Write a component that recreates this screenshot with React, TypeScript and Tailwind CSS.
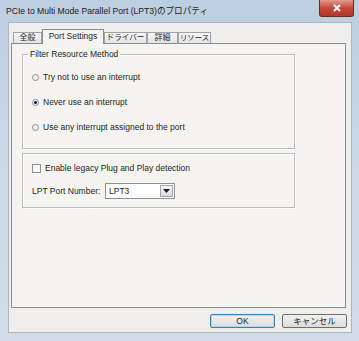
import React from "react";

const ui = { fontFamily: '"Liberation Sans", "Noto Sans CJK JP", sans-serif' };

function Radio({ checked, label }: { checked?: boolean; label: string }) {
  return (
    <div className="flex items-center h-[13px]">
      <div className="w-[7px] h-[7px] rounded-full border border-[#8a8f96] bg-[#f4f4f4] flex items-center justify-center">
        {checked && <div className="w-[3px] h-[3px] rounded-full bg-[#1a1a1a]" />}
      </div>
      <span className="ml-[4px] text-[8.5px] text-[#1e1e1e] whitespace-nowrap">{label}</span>
    </div>
  );
}

const tabs = [
  { label: "全般", cls: "w-[29px] text-[8px]" },
  { label: "Port Settings", cls: "w-[62px] text-[8.5px]", active: true },
  { label: "ドライバー", cls: "w-[43px] text-[7.6px]" },
  { label: "詳細", cls: "w-[31px] text-[8px]" },
  { label: "リソース", cls: "w-[33px] text-[7.4px]" },
];

export default function App() {
  return (
    <div
      className="w-[359px] h-[341px] flex flex-col bg-gradient-to-b from-[#bccfe1] via-[#cbd9e6] to-[#d2dde8] overflow-hidden"
      style={ui}
    >
      {/* title bar */}
      <div className="h-[22px] flex items-start relative">
        <div className="pl-[6px] pt-[7px] text-[8.6px] leading-none text-[#1b1b1b] whitespace-nowrap">
          PCIe to Multi Mode Parallel Port (LPT3)のプロパティ
        </div>
        <div className="absolute left-[319px] top-0 w-[35px] h-[17px] rounded-b-[3px] border border-[#6d2a22] border-t-0 bg-gradient-to-b from-[#e29a8c] via-[#c8463a] to-[#b0382c] flex items-center justify-center">
          <svg width="10" height="8" viewBox="0 0 10 8">
            <path d="M2 1 L8 7 M8 1 L2 7" stroke="#ffffff" strokeWidth="2" />
          </svg>
        </div>
      </div>

      {/* client area */}
      <div className="mx-[7px] ml-[8px] mb-[8px] flex-1 bg-[#efeeeb] border border-[#a9b5c2] flex flex-col">
        {/* tabs */}
        <div className="flex items-end h-[20px] pl-[4px]">
          {tabs.map((t) =>
            t.active ? (
              <div
                key={t.label}
                className={`${t.cls} relative z-10 h-[15px] -mb-[1px] border border-[#898c95] border-b-0 bg-[#f5f4f1] text-[#1e1e1e] flex items-center justify-center pb-[1px] whitespace-nowrap`}
              >
                {t.label}
              </div>
            ) : (
              <div
                key={t.label}
                className={`${t.cls} h-[11px] border border-[#9ea3aa] border-b-0 bg-gradient-to-b from-[#f7f7f7] to-[#e4e4e4] text-[#1e1e1e] flex items-center justify-center whitespace-nowrap overflow-hidden`}
              >
                {t.label}
              </div>
            )
          )}
        </div>

        {/* panel */}
        <div className="ml-[2px] mr-[5px] h-[265px] border border-[#898c95] bg-[#f5f4f1] px-[10px] pt-[10px]">
          {/* group 1 */}
          <div className="relative w-[273px] h-[95px] border border-[#b8bdc4] shadow-[inset_1px_1px_0_#ffffff,1px_1px_0_#ffffff] pt-[16px] pl-[9px] flex flex-col gap-[12px]">
            <span className="absolute left-[5px] -top-[6px] px-[2px] bg-[#f5f4f1] text-[8.5px] text-[#1e1e1e] leading-[11px] whitespace-nowrap">
              Filter Resource Method
            </span>
            <Radio label="Try not to use an interrupt" />
            <Radio checked label="Never use an interrupt" />
            <Radio label="Use any interrupt assigned to the port" />
          </div>

          {/* group 2 */}
          <div className="mt-[4px] w-[273px] h-[55px] border border-[#b8bdc4] shadow-[inset_1px_1px_0_#ffffff,1px_1px_0_#ffffff] pt-[9px] pl-[9px] flex flex-col gap-[9px]">
            <div className="flex items-center h-[11px]">
              <div className="w-[9px] h-[9px] border border-[#8a8f96] bg-[#f8f8f8]" />
              <span className="ml-[4px] text-[8.5px] text-[#1e1e1e] whitespace-nowrap">Enable legacy Plug and Play detection</span>
            </div>
            <div className="flex items-center h-[16px]">
              <span className="w-[73px] text-[8.5px] text-[#1e1e1e] whitespace-nowrap">LPT Port Number:</span>
              <div className="w-[70px] h-[16px] border border-[#8c929a] bg-white flex items-center">
                <span className="flex-1 pl-[3px] text-[8.5px] text-[#1e1e1e]">LPT3</span>
                <div className="w-[13px] h-[12px] mr-[1px] border border-[#a0a5ab] bg-gradient-to-b from-[#f6f6f6] to-[#dcdcdc] flex items-center justify-center">
                  <svg width="7" height="4" viewBox="0 0 7 4">
                    <path d="M0 0 H7 L3.5 4 Z" fill="#1e1e1e" />
                  </svg>
                </div>
              </div>
            </div>
          </div>
        </div>

        {/* buttons */}
        <div className="flex justify-end gap-[7px] mt-[6px] mr-[4px]">
          <button className="w-[65px] h-[14px] rounded-[2px] border border-[#3c7fb1] shadow-[inset_0_0_0_1px_#a8dcf6] bg-gradient-to-b from-[#f2f2f2] to-[#dcdcdc] text-[8.5px] leading-none text-[#1e1e1e]">
            OK
          </button>
          <button className="w-[65px] h-[14px] rounded-[2px] border border-[#707070] bg-gradient-to-b from-[#f2f2f2] to-[#dcdcdc] text-[8.5px] leading-none text-[#1e1e1e] whitespace-nowrap">
            キャンセル
          </button>
        </div>
      </div>
    </div>
  );
}
